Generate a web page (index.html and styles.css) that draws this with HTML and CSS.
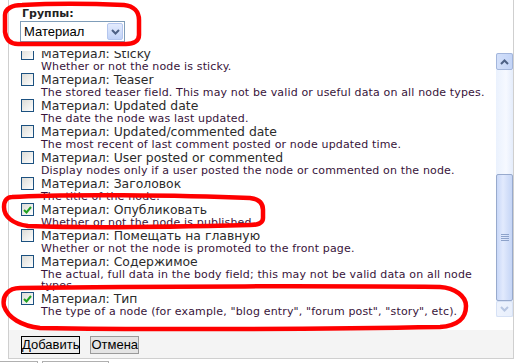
FILE: index.html
```html
<!DOCTYPE html>
<html lang="ru">
  <head>
    <meta charset="UTF-8" />
    <title>Группы</title>
    <link rel="stylesheet" href="styles.css">
  </head>
  <body>
    <div class="panel">
      <div class="group">
        <div class="group-label">Группы:</div>
        <div class="select">
          <span class="select-value">Материал</span>
          <span class="select-arrow">
            <svg width="9" height="6" viewBox="0 0 9 6"><path d="M1 1 L4.5 4.5 L8 1" fill="none" stroke="#4d6185" stroke-width="2"/></svg>
          </span>
        </div>
      </div>

      <div class="list">
        <div class="items">
          <div class="items-inner">
            <div class="item">
              <div class="item-row"><span class="checkbox"></span>Материал: Sticky</div>
              <div class="item-desc">Whether or not the node is sticky.</div>
            </div>
            <div class="item">
              <div class="item-row"><span class="checkbox"></span>Материал: Teaser</div>
              <div class="item-desc">The stored teaser field. This may not be valid or useful data on all node types.</div>
            </div>
            <div class="item">
              <div class="item-row"><span class="checkbox"></span>Материал: Updated date</div>
              <div class="item-desc">The date the node was last updated.</div>
            </div>
            <div class="item">
              <div class="item-row"><span class="checkbox"></span>Материал: Updated/commented date</div>
              <div class="item-desc">The most recent of last comment posted or node updated time.</div>
            </div>
            <div class="item">
              <div class="item-row"><span class="checkbox"></span>Материал: User posted or commented</div>
              <div class="item-desc">Display nodes only if a user posted the node or commented on the node.</div>
            </div>
            <div class="item">
              <div class="item-row"><span class="checkbox"></span>Материал: Заголовок</div>
              <div class="item-desc">The title of the node.</div>
            </div>
            <div class="item">
              <div class="item-row"><span class="checkbox checked"><svg width="9" height="8" viewBox="0 0 9 8"><path d="M1 4 L3.5 6.5 L8 1" fill="none" stroke="#21a121" stroke-width="2"/></svg></span>Материал: Опубликовать</div>
              <div class="item-desc">Whether or not the node is published.</div>
            </div>
            <div class="item">
              <div class="item-row"><span class="checkbox"></span>Материал: Помещать на главную</div>
              <div class="item-desc">Whether or not the node is promoted to the front page.</div>
            </div>
            <div class="item">
              <div class="item-row"><span class="checkbox"></span>Материал: Содержимое</div>
              <div class="item-desc">The actual, full data in the body field; this may not be valid data on all node types.</div>
            </div>
            <div class="item">
              <div class="item-row"><span class="checkbox checked"><svg width="9" height="8" viewBox="0 0 9 8"><path d="M1 4 L3.5 6.5 L8 1" fill="none" stroke="#21a121" stroke-width="2"/></svg></span>Материал: Тип</div>
              <div class="item-desc">The type of a node (for example, "blog entry", "forum post", "story", etc).</div>
            </div>
          </div>
        </div>

        <div class="scrollbar">
          <div class="sb-btn">
            <svg width="9" height="6" viewBox="0 0 9 6"><path d="M1 5 L4.5 1.5 L8 5" fill="none" stroke="#4d6185" stroke-width="2"/></svg>
          </div>
          <div class="sb-track"></div>
          <div class="sb-thumb"><span class="grip"></span></div>
          <div class="sb-btn sb-btn-off">
            <svg width="9" height="6" viewBox="0 0 9 6"><path d="M1 1 L4.5 4.5 L8 1" fill="none" stroke="#b7c6e2" stroke-width="2"/></svg>
          </div>
        </div>
      </div>

      <div class="footer">
        <button class="btn btn-default">Добавить</button>
        <button class="btn">Отмена</button>
      </div>
    </div>

    <div class="below">
      <span class="below-box first"></span>
      <span class="below-box second"></span>
    </div>

    <svg class="marks" width="514" height="363" viewBox="0 0 514 363">
      <g fill="none" stroke="#ff0000" stroke-width="4.5" stroke-linejoin="round">
        <path d="M22,5 C60,3 100,4 124,5 C134,6 139,12 139,20 L139,35 C139,41 134,44 126,44 L18,44 C10,44 6,39 5,32 L5,15 C5,9 12,5 22,5 Z"/>
        <path d="M12,197 C60,194 180,195 250,198 C259,199 263,203 263,210 L263,218 C263,223 259,225 250,225 C170,227 80,228 28,226 C12,224 4,216 4,207 C4,200 8,197 12,197 Z"/>
        <path d="M20,288 C150,286 350,286 440,287 C455,288 466,296 466,306 C466,318 458,326 440,327 C330,329 150,330 40,328 C22,326 8,318 4,306 C2,296 8,288 20,288 Z"/>
      </g>
    </svg>
  </body>
</html>
```

FILE: styles.css
```css
* {
  box-sizing: border-box;
}
body {
  margin: 0;
  width: 514px;
  height: 363px;
  overflow: hidden;
  position: relative;
  background: #fff;
  font-family: "DejaVu Sans", Verdana, sans-serif;
  color: #2b2b2b;
}
.panel {
  margin-left: 8px;
  width: 506px;
  height: 359px;
  border-left: 1px solid #cfcfcf;
  border-right: 1px solid #cfcfcf;
  border-bottom: 1px solid #cfcfcf;
  display: flex;
  flex-direction: column;
}
.group {
  padding: 7px 0 0 11px;
  height: 51px;
}
.group-label {
  font-size: 11px;
  font-weight: bold;
  line-height: 14px;
  padding-left: 2px;
  color: #222;
}
.select {
  width: 105px;
  height: 21px;
  border: 1px solid #7f9db9;
  display: flex;
  align-items: center;
  justify-content: space-between;
  padding: 1px;
  padding-left: 3px;
  font-family: "Liberation Sans", Arial, sans-serif;
  font-size: 13px;
  color: #000;
}
.select-arrow {
  width: 16px;
  height: 17px;
  border: 1px solid #b4c6ee;
  border-radius: 2px;
  background: linear-gradient(#e3ebfd, #c1d3f8);
  display: flex;
  align-items: center;
  justify-content: center;
}
.list {
  display: flex;
  height: 279px;
  align-items: flex-start;
}
.items {
  flex: 1;
  height: 268px;
  overflow: hidden;
  padding-left: 12px;
}
.items-inner {
  margin-top: -5px;
}
.item-row {
  display: flex;
  align-items: center;
  height: 15px;
  font-size: 12.4px;
  white-space: nowrap;
}
.checkbox {
  width: 13px;
  height: 13px;
  margin-right: 7px;
  border: 1px solid #1c5180;
  background: linear-gradient(135deg, #dcdcd7, #f4f4f2 70%, #fff);
  display: flex;
  align-items: center;
  justify-content: center;
  flex: none;
}
.item-desc {
  padding-left: 20px;
  font-size: 11px;
  letter-spacing: 0.15px;
  line-height: 11px;
  color: #38143a;
}
.scrollbar {
  width: 17px;
  height: 264px;
  margin-top: 2px;
  display: flex;
  flex-direction: column;
  background: linear-gradient(to right, #eaf1fd, #f6f9ff 60%, #e4ecfb);
}
.sb-btn {
  height: 17px;
  border: 1px solid #a3b6dc;
  border-radius: 2px;
  background: linear-gradient(to right, #d3e0fa, #c3d4f7);
  display: flex;
  align-items: center;
  justify-content: center;
}
.sb-btn-off {
  height: 16px;
  border-color: #d6e1f5;
  background: linear-gradient(to right, #eef3fd, #e8effc);
}
.sb-track {
  height: 104px;
}
.sb-thumb {
  height: 127px;
  border: 1px solid #98aacd;
  border-radius: 2px;
  background: linear-gradient(to right, #c9d8f8, #e2eafd 40%, #c5d5f6);
  display: flex;
  align-items: center;
  justify-content: center;
}
.grip {
  width: 8px;
  height: 7px;
  background: repeating-linear-gradient(#8da2ca 0 1px, transparent 1px 2px);
}
.footer {
  margin-top: auto;
  height: 28px;
  background: #f4f4f4;
  padding: 6px 0 0 12px;
  display: flex;
  align-items: flex-start;
}
.btn {
  height: 18px;
  margin: 0 10px 0 0;
  padding: 0;
  border: 1px solid #9a9a9a;
  background: #e4e4e4;
  font-family: "Liberation Sans", Arial, sans-serif;
  font-size: 13px;
  line-height: 16px;
  color: #000;
}
.btn-default {
  border-color: #000;
  background: #ececec;
}
.below {
  display: flex;
  margin-top: 2px;
}
.below-box {
  height: 10px;
  border: 1px solid #b0b0b0;
  border-bottom: none;
}
.below-box.first {
  width: 38px;
  border-left: none;
}
.below-box.second {
  width: 67px;
  margin-left: 4px;
}
.marks {
  position: absolute;
  top: 0;
  left: 0;
  pointer-events: none;
  filter: blur(0.4px);
}
```
